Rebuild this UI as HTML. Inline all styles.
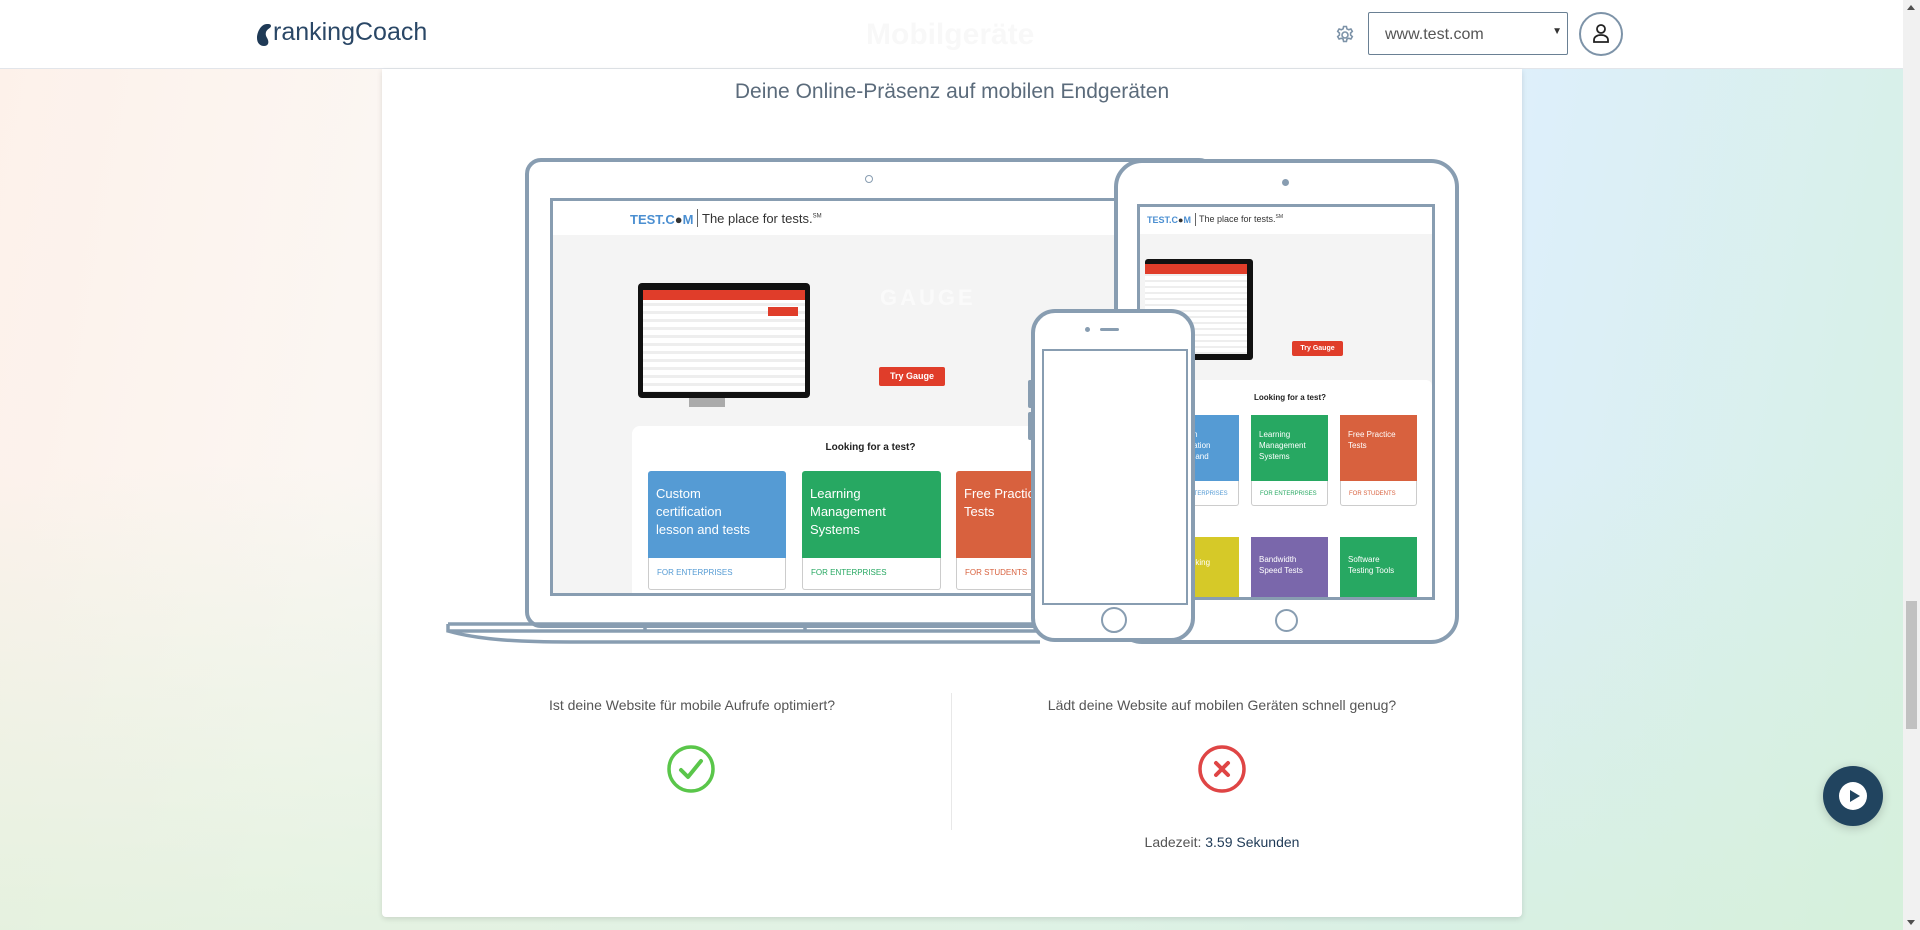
<!DOCTYPE html>
<html><head><meta charset="utf-8"><style>
*{margin:0;padding:0;box-sizing:border-box}
body{width:1920px;height:930px;overflow:hidden;position:relative;font-family:"Liberation Sans",sans-serif;
background:linear-gradient(100deg,#fdf1ea 0%,#fbf6f2 20%,#eef6fb 55%,#ddeffa 75%,#d6f0e2 100%);}
.abs{position:absolute}
.bgb{position:absolute;left:0;top:0;width:1920px;height:930px;background:linear-gradient(180deg,rgba(255,255,255,0) 50%,rgba(214,240,214,.6) 100%)}
#hdr{position:absolute;left:0;top:0;width:1903px;height:69px;background:#fff;border-bottom:1px solid #e2e5ea}
#card{position:absolute;left:382px;top:69px;width:1140px;height:848px;background:#fff;border-radius:0 0 4px 4px;box-shadow:0 2px 6px rgba(0,0,0,.12)}
.fr{position:absolute;border:4px solid #889db1;background:#fff}
.sc{position:absolute;border:3px solid #889db1;overflow:hidden;background:#f4f4f4}
.tc{position:absolute;color:#fff;font-size:13px;line-height:18px;padding:14px 8px;}
.cb{position:absolute;background:#fff;border:1px solid #ccc;border-top:none;border-radius:0 0 3px 3px;font-size:8px;padding:10px 8px}
</style></head><body>
<div class="bgb"></div>
<div id="hdr">
  <svg class="abs" style="left:255px;top:22px" width="18" height="26" viewBox="0 0 18 26"><path d="M12 2 C6 2 2 10 2 16 C2 21 5 24 9 24 C13 24 14 21 13 18 C12 15 10 14 11 10 C12 7 16 6 16 4 C16 2 14 2 12 2Z" fill="#1f3a56"/></svg>
  <div class="abs" style="left:273px;top:18px;font-size:25px;color:#2a4766">rankingCoach</div>
  <div class="abs" style="left:866px;top:18px;font-size:30px;color:#f8f8f8;font-weight:bold">Mobilgeräte</div>
  <svg class="abs" style="left:1335px;top:25px" width="20" height="20" viewBox="0 0 20 20"><g fill="none" stroke="#7d93a8" stroke-width="1.6"><circle cx="10" cy="10" r="3"/><path d="M8.6 1.5h2.8l.5 2.3 1.8 1 2.2-.8 1.4 2.4-1.7 1.6v2l1.7 1.6-1.4 2.4-2.2-.8-1.8 1-.5 2.3H8.6l-.5-2.3-1.8-1-2.2.8-1.4-2.4 1.7-1.6v-2L2.7 6.4l1.4-2.4 2.2.8 1.8-1z"/></g></svg>
  <div class="abs" style="left:1368px;top:12px;width:200px;height:43px;border:1px solid #6a8094;border-radius:2px;font-size:16px;color:#555;padding:13px 16px">www.test.com<span class="abs" style="right:5px;top:13px;font-size:10px;color:#333">▼</span></div>
  <div class="abs" style="left:1579px;top:12px;width:44px;height:44px;border:2px solid #7d93a8;border-radius:50%"></div>
  <svg class="abs" style="left:1591px;top:22px" width="20" height="24" viewBox="0 0 20 24"><g fill="none" stroke="#222" stroke-width="1.8"><circle cx="10" cy="7" r="4"/><path d="M3 20v-2c0-3 3-5 7-5s7 2 7 5v2z"/></g></svg>
</div>
<div id="card"></div>
<div class="abs" style="left:382px;top:80px;width:1140px;text-align:center;font-size:21px;color:#5b6b7b">Deine Online-Präsenz auf mobilen Endgeräten</div>

<!-- Laptop -->
<div class="fr" style="left:525px;top:158px;width:690px;height:470px;border-radius:16px"></div>
<div class="abs" style="left:865px;top:175px;width:8px;height:8px;border:1.5px solid #889db1;border-radius:50%"></div>
<div class="sc" style="left:550px;top:198px;width:600px;height:398px">
  <div class="abs" style="left:0;top:0;width:600px;height:34px;background:#fff"></div>
  <div class="abs" style="left:77px;top:11px;font-size:13px;font-weight:bold;color:#4b8fd1">TEST.C<span style="color:#333">●</span>M</div>
  <div class="abs" style="left:144px;top:8px;height:18px;border-left:1px solid #666"></div>
  <div class="abs" style="left:149px;top:10px;font-size:13px;color:#333">The place for tests.<sup style="font-size:6px">SM</sup></div>
  <div class="abs" style="left:85px;top:82px;width:172px;height:115px;background:#111;border-radius:4px">
    <div class="abs" style="left:5px;top:7px;width:162px;height:102px;background:repeating-linear-gradient(180deg,#fff 0 5px,#eee 5px 8px)"></div>
    <div class="abs" style="left:5px;top:7px;width:162px;height:10px;background:#e03d2a"></div>
    <div class="abs" style="left:130px;top:24px;width:30px;height:9px;background:#e03d2a"></div>
  </div>
  <div class="abs" style="left:136px;top:197px;width:36px;height:9px;background:#aaa"></div>
  <div class="abs" style="left:327px;top:84px;font-size:22px;font-weight:bold;color:#fafafa;letter-spacing:3px">GAUGE</div>
  <div class="abs" style="left:326px;top:166px;width:66px;height:19px;background:#e03d2a;color:#fff;font-size:9px;font-weight:bold;text-align:center;line-height:19px;border-radius:2px">Try Gauge</div>
  <div class="abs" style="left:79px;top:225px;width:520px;height:200px;background:#fff;border-radius:8px"></div>
  <div class="abs" style="left:240px;top:241px;width:155px;text-align:center;font-size:10px;font-weight:bold;color:#222">Looking for a test?</div>
  <div class="tc" style="left:95px;top:270px;width:138px;height:87px;background:#559bd4;border-radius:3px 3px 0 0">Custom<br>certification<br>lesson and tests</div>
  <div class="cb" style="left:95px;top:357px;width:138px;height:32px;color:#559bd4">FOR ENTERPRISES</div>
  <div class="tc" style="left:249px;top:270px;width:139px;height:87px;background:#27a862;border-radius:3px 3px 0 0">Learning<br>Management<br>Systems</div>
  <div class="cb" style="left:249px;top:357px;width:139px;height:32px;color:#27a862">FOR ENTERPRISES</div>
  <div class="tc" style="left:403px;top:270px;width:139px;height:87px;background:#d8613e;border-radius:3px 3px 0 0">Free Practice<br>Tests</div>
  <div class="cb" style="left:403px;top:357px;width:139px;height:32px;color:#d8613e">FOR STUDENTS</div>
</div>
<svg class="abs" style="left:440px;top:618px" width="600" height="28" viewBox="0 0 600 28"><g fill="none" stroke="#889db1" stroke-width="3.5"><path d="M8 6 H600"/><path d="M8 6 V13 C40 22 80 24 130 24 H600"/><path d="M9 13 H600"/><path d="M205 6 V14 M365 6 V14"/></g></svg>

<!-- Tablet -->
<div class="fr" style="left:1114px;top:159px;width:345px;height:485px;border-radius:28px"></div>
<div class="abs" style="left:1282px;top:179px;width:7px;height:7px;background:#889db1;border-radius:50%"></div>
<div class="abs" style="left:1275px;top:609px;width:23px;height:23px;border:2px solid #889db1;border-radius:50%"></div>
<div class="sc" style="left:1137px;top:204px;width:298px;height:396px">
  <div class="abs" style="left:0;top:0;width:298px;height:27px;background:#fff"></div>
  <div class="abs" style="left:7px;top:8px;font-size:9px;font-weight:bold;color:#4b8fd1">TEST.C<span style="color:#333">●</span>M</div>
  <div class="abs" style="left:55px;top:6px;height:13px;border-left:1px solid #666"></div>
  <div class="abs" style="left:59px;top:7px;font-size:9px;color:#333">The place for tests.<sup style="font-size:5px">SM</sup></div>
  <div class="abs" style="left:5px;top:52px;width:108px;height:101px;background:#111;border-radius:3px">
    <div class="abs" style="left:0;top:5px;width:102px;height:90px;background:repeating-linear-gradient(180deg,#fff 0 4px,#eee 4px 6px)"></div>
    <div class="abs" style="left:0;top:5px;width:102px;height:10px;background:#e03d2a"></div>
  </div>
  <div class="abs" style="left:152px;top:134px;width:51px;height:15px;background:#e03d2a;color:#fff;font-size:7px;font-weight:bold;text-align:center;line-height:15px;border-radius:2px">Try Gauge</div>
  <div class="abs" style="left:12px;top:173px;width:280px;height:230px;background:#fff;border-radius:6px"></div>
  <div class="abs" style="left:90px;top:186px;width:120px;text-align:center;font-size:8px;font-weight:bold;color:#222">Looking for a test?</div>
  <div class="tc" style="left:22px;top:208px;width:77px;height:66px;background:#559bd4;font-size:8px;line-height:11px">Custom<br>certification<br>lesson and</div>
  <div class="cb" style="left:22px;top:274px;width:77px;height:25px;color:#559bd4;font-size:6px">FOR ENTERPRISES</div>
  <div class="tc" style="left:111px;top:208px;width:77px;height:66px;background:#27a862;font-size:8px;line-height:11px">Learning<br>Management<br>Systems</div>
  <div class="cb" style="left:111px;top:274px;width:77px;height:25px;color:#27a862;font-size:6px">FOR ENTERPRISES</div>
  <div class="tc" style="left:200px;top:208px;width:77px;height:66px;background:#d8613e;font-size:8px;line-height:11px">Free Practice<br>Tests</div>
  <div class="cb" style="left:200px;top:274px;width:77px;height:25px;color:#d8613e;font-size:6px">FOR STUDENTS</div>
  <div class="tc" style="left:22px;top:330px;width:77px;height:70px;background:#d6c928;font-size:8px;line-height:11px;padding-top:20px">Networking</div>
  <div class="tc" style="left:111px;top:330px;width:77px;height:70px;background:#7a67ab;font-size:8px;line-height:11px;padding-top:17px">Bandwidth<br>Speed Tests</div>
  <div class="tc" style="left:200px;top:330px;width:77px;height:70px;background:#27a862;font-size:8px;line-height:11px;padding-top:17px">Software<br>Testing Tools</div>
</div>

<!-- Phone -->
<div class="abs" style="left:1028px;top:380px;width:5px;height:28px;background:#889db1;border-radius:2px"></div>
<div class="abs" style="left:1028px;top:412px;width:5px;height:28px;background:#889db1;border-radius:2px"></div>
<div class="fr" style="left:1031px;top:309px;width:164px;height:333px;border-radius:24px"></div>
<div class="abs" style="left:1085px;top:327px;width:5px;height:5px;background:#889db1;border-radius:50%"></div>
<div class="abs" style="left:1100px;top:328px;width:19px;height:3px;background:#889db1;border-radius:2px"></div>
<div class="abs" style="left:1042px;top:349px;width:146px;height:256px;border:2.5px solid #889db1;background:#fff"></div>
<div class="abs" style="left:1101px;top:607px;width:26px;height:26px;border:2px solid #889db1;border-radius:50%"></div>

<!-- bottom -->
<div class="abs" style="left:951px;top:693px;width:1px;height:137px;background:#e8e8e8"></div>
<div class="abs" style="left:452px;top:697px;width:480px;text-align:center;font-size:14px;color:#555">Ist deine Website für mobile Aufrufe optimiert?</div>
<div class="abs" style="left:972px;top:697px;width:500px;text-align:center;font-size:14px;color:#555">Lädt deine Website auf mobilen Geräten schnell genug?</div>
<svg class="abs" style="left:666px;top:744px" width="50" height="50" viewBox="0 0 50 50"><circle cx="25" cy="25" r="22" fill="none" stroke="#5ac64a" stroke-width="3.5"/><path d="M15 26 L22 33 L35 17" fill="none" stroke="#5ac64a" stroke-width="4" stroke-linecap="round" stroke-linejoin="round"/></svg>
<svg class="abs" style="left:1197px;top:744px" width="50" height="50" viewBox="0 0 50 50"><circle cx="25" cy="25" r="22" fill="none" stroke="#df4545" stroke-width="3.5"/><path d="M19 19 L31 31 M31 19 L19 31" fill="none" stroke="#df4545" stroke-width="4" stroke-linecap="round"/></svg>
<div class="abs" style="left:972px;top:834px;width:500px;text-align:center;font-size:14px;color:#555">Ladezeit: <span style="color:#1f3a56">3.59 Sekunden</span></div>

<!-- play -->
<div class="abs" style="left:1823px;top:766px;width:60px;height:60px;border-radius:50%;background:#21445f;box-shadow:0 2px 10px rgba(0,0,0,.2)"></div>
<div class="abs" style="left:1839px;top:782px;width:28px;height:28px;border-radius:50%;background:#fff"></div>
<svg class="abs" style="left:1849px;top:789px" width="12" height="14" viewBox="0 0 12 14"><path d="M1 1 L11 7 L1 13Z" fill="#21445f"/></svg>

<!-- scrollbar -->
<div class="abs" style="left:1903px;top:0;width:17px;height:930px;background:#f1f1f1"></div>
<div class="abs" style="left:1906px;top:601px;width:11px;height:128px;background:#c1c1c1"></div>
<div class="abs" style="left:1907px;top:5px;width:0;height:0;border-left:4px solid transparent;border-right:4px solid transparent;border-bottom:5px solid #505050"></div>
<div class="abs" style="left:1907px;top:920px;width:0;height:0;border-left:4px solid transparent;border-right:4px solid transparent;border-top:5px solid #505050"></div>
</body></html>
